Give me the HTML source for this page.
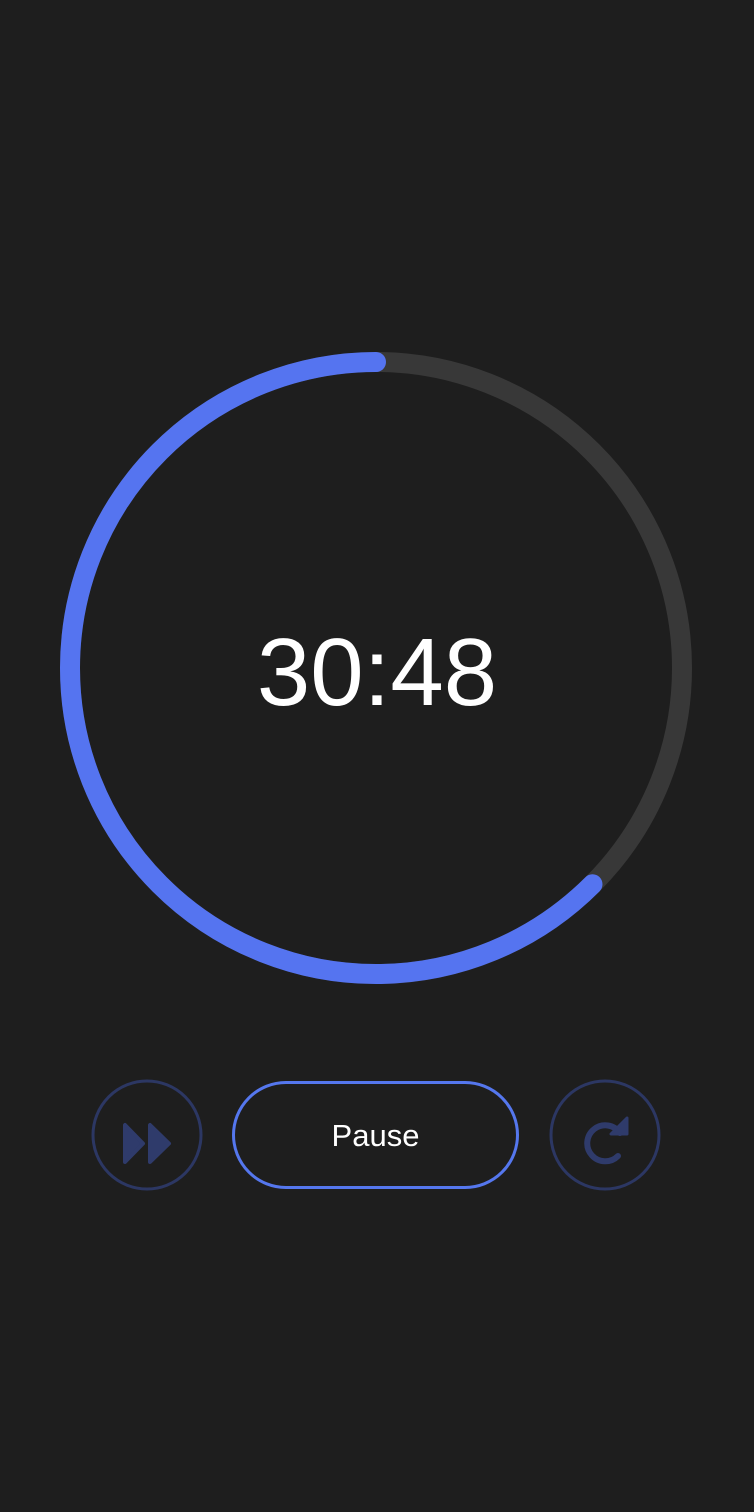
<!DOCTYPE html>
<html><head><style>
html,body{margin:0;padding:0;background:#1e1e1e;}
body{width:754px;height:1512px;position:relative;overflow:hidden;font-family:"Liberation Sans",sans-serif;}
.t{position:absolute;left:0;width:754px;top:618px;text-align:center;color:#fff;font-size:96px;line-height:110px;}
.p{position:absolute;left:232px;top:1081px;width:281px;height:102px;border:3px solid #5577ee;border-radius:60px;color:#fff;font-size:31px;text-align:center;line-height:104px;}
</style></head><body>
<svg width="754" height="1512" style="position:absolute;left:0;top:0">
<circle cx="376" cy="668" r="306" fill="none" stroke="#383838" stroke-width="20"/>
<circle cx="376" cy="668" r="306" fill="none" stroke="#5574f0" stroke-width="20" stroke-linecap="round"
 stroke-dasharray="1201.7 2000" transform="rotate(-90 376 668) scale(1 -1) translate(0 -1336)" />
<circle cx="147" cy="1135" r="54" fill="none" stroke="#2c3763" stroke-width="3"/>
<circle cx="605" cy="1135" r="54" fill="none" stroke="#2c3763" stroke-width="3"/>
<g fill="#2f3b6b" stroke="#2f3b6b" stroke-width="4" stroke-linejoin="round">
<path d="M125 1125 L125 1162 L143 1143.5 Z"/>
<path d="M150 1125 L150 1162 L169 1143.5 Z"/>
</g>
<path d="M620 1133 A18 18 0 1 0 618 1156" fill="none" stroke="#2f3b6b" stroke-width="6" stroke-linecap="round"/>
<path d="M611 1134 L627 1134 L627 1118 Z" fill="#2f3b6b" stroke="#2f3b6b" stroke-width="3" stroke-linejoin="round"/>
</svg>
<div class="t">30:48</div>
<div class="p">Pause</div>
</body></html>
